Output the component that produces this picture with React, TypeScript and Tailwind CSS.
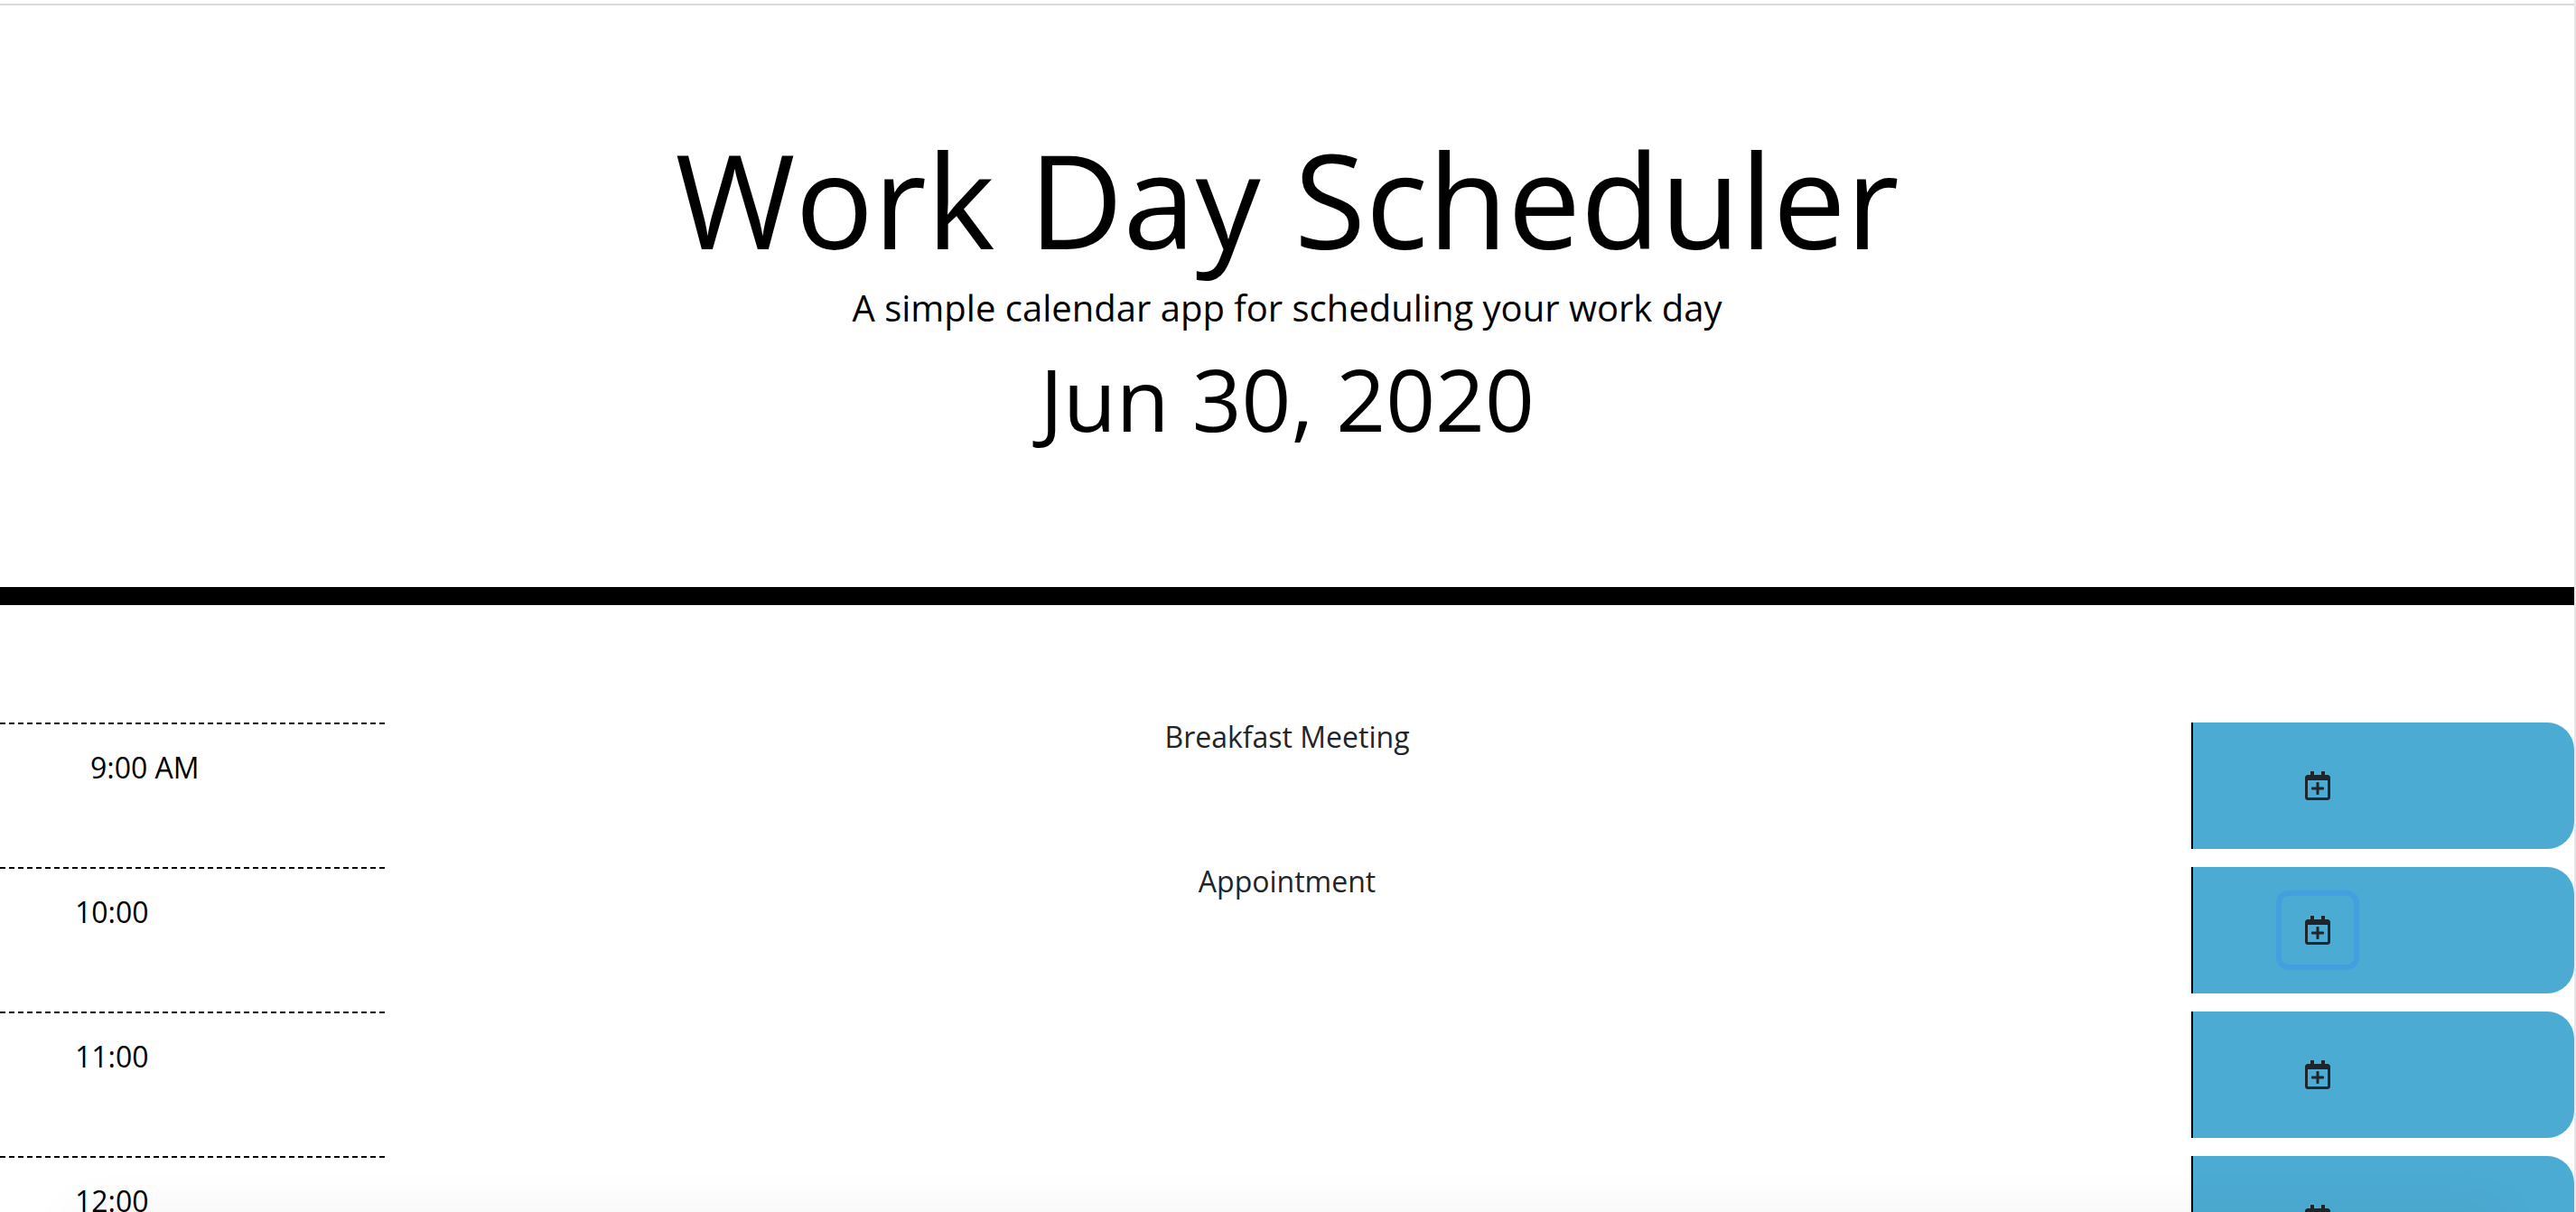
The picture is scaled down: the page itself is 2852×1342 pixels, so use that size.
import { useState } from "react";
import { FaRegCalendarPlus } from "react-icons/fa";

const slots = [
  { hour: "9:00 AM", text: "Breakfast Meeting", indent: "pl-[100px]" },
  { hour: "10:00", text: "Appointment", indent: "pl-[83px]" },
  { hour: "11:00", text: "", indent: "pl-[83px]" },
  { hour: "12:00", text: "", indent: "pl-[83px]" },
];

export default function App() {
  const [active, setActive] = useState("10:00");
  return (
    <div className="relative h-screen overflow-hidden border-r-2 border-[#e8e8e8] bg-white pt-1 font-['Open_Sans',sans-serif] text-black">
      <header className="border-t-2 border-b-[20px] border-t-[#dadade] border-b-black pt-32 pb-[151px] text-center">
        <h1 className="text-[144px] leading-[172px]">Work Day Scheduler</h1>
        <p className="mt-[5px] text-[40px] leading-[60px]">A simple calendar app for scheduling your work day</p>
        <p className="mt-3 text-[96px] leading-[116px]">Jun 30, 2020</p>
      </header>
      <main className="mt-[130px] flex flex-col gap-5">
        {slots.map((s) => (
          <section key={s.hour} className="flex h-[140px]">
            <div className="w-[15%]">
              <div className="h-0.5 bg-[repeating-linear-gradient(to_right,#000_0_6px,transparent_6px_10px)]" />
              <label htmlFor={`slot-${s.hour}`} className={`block pt-6 text-[32px] leading-[48px] ${s.indent}`}>
                {s.hour}
              </label>
            </div>
            <textarea
              id={`slot-${s.hour}`}
              defaultValue={s.text}
              className="w-[70%] resize-none text-center text-[32px] leading-8 text-[#212529] outline-none"
            />
            <div className="ml-[3px] flex min-w-0 flex-1 items-center rounded-r-[30px] border-l-2 border-black bg-[#4cabd3] pl-[98px]">
              <button
                type="button"
                aria-label={`Save ${s.hour}`}
                onClick={() => setActive(s.hour)}
                className={`flex h-[76px] w-20 items-center justify-center rounded-lg text-[#212529] ${
                  active === s.hour ? "shadow-[0_0_0_6px_#439fdd]" : ""
                }`}
              >
                <FaRegCalendarPlus className="h-8 w-7" />
              </button>
            </div>
          </section>
        ))}
      </main>
      <div className="pointer-events-none absolute inset-x-20 top-full h-24 shadow-[0_0_60px_rgba(0,0,0,0.05)]" />
    </div>
  );
}
